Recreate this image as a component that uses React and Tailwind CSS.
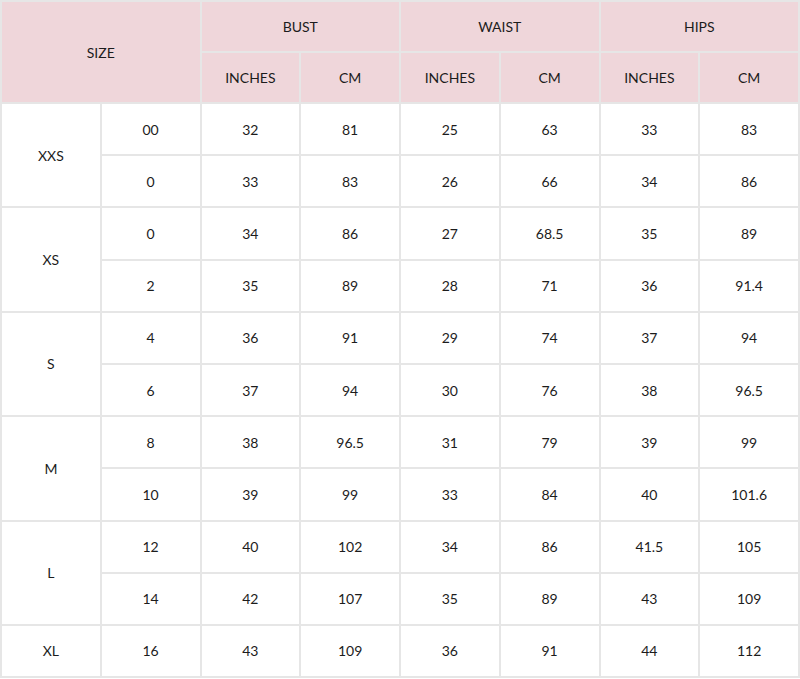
const rows = [
  { size: 'XXS', subs: [
    ['00', '32', '81', '25', '63', '33', '83'],
    ['0', '33', '83', '26', '66', '34', '86'],
  ] },
  { size: 'XS', subs: [
    ['0', '34', '86', '27', '68.5', '35', '89'],
    ['2', '35', '89', '28', '71', '36', '91.4'],
  ] },
  { size: 'S', subs: [
    ['4', '36', '91', '29', '74', '37', '94'],
    ['6', '37', '94', '30', '76', '38', '96.5'],
  ] },
  { size: 'M', subs: [
    ['8', '38', '96.5', '31', '79', '39', '99'],
    ['10', '39', '99', '33', '84', '40', '101.6'],
  ] },
  { size: 'L', subs: [
    ['12', '40', '102', '34', '86', '41.5', '105'],
    ['14', '42', '107', '35', '89', '43', '109'],
  ] },
  { size: 'XL', subs: [
    ['16', '43', '109', '36', '91', '44', '112'],
  ] },
];

const base = 'border-2 border-[#e6e6e6] text-center align-middle w-[100px] p-0';
const head = `${base} h-[51px] font-normal`;
const cell = `${base} h-[52.2px]`;

export default function App() {
  return (
    <div className="w-[800px] bg-white text-[#1c1c1c] text-[14px]" style={{ fontFamily: 'Lato, "Open Sans", sans-serif' }}>
      <table className="w-[800px] border-collapse table-fixed">
        <thead className="bg-[#efd6da]">
          <tr>
            <th colSpan={2} rowSpan={2} className={head}>SIZE</th>
            <th colSpan={2} className={head}>BUST</th>
            <th colSpan={2} className={head}>WAIST</th>
            <th colSpan={2} className={head}>HIPS</th>
          </tr>
          <tr>
            <th className={head}>INCHES</th>
            <th className={head}>CM</th>
            <th className={head}>INCHES</th>
            <th className={head}>CM</th>
            <th className={head}>INCHES</th>
            <th className={head}>CM</th>
          </tr>
        </thead>
        <tbody>
          {rows.map((group) =>
            group.subs.map((r, i) => (
              <tr key={group.size + i}>
                {i === 0 && (
                  <td rowSpan={group.subs.length} className={cell}>{group.size}</td>
                )}
                {r.map((v, j) => (
                  <td key={j} className={cell}>{v}</td>
                ))}
              </tr>
            ))
          )}
        </tbody>
      </table>
    </div>
  );
}
